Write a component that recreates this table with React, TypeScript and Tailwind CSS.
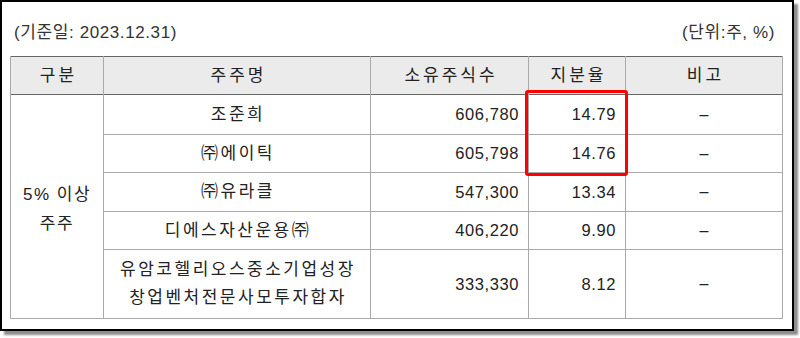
const rows = [
  { name: ["조준희"], shares: "606,780", ratio: "14.79", h: "h-[40px]" },
  { name: ["㈜에이틱"], shares: "605,798", ratio: "14.76", h: "h-[38px]" },
  { name: ["㈜유라클"], shares: "547,300", ratio: "13.34", h: "h-[39px]" },
  { name: ["디에스자산운용㈜"], shares: "406,220", ratio: "9.90", h: "h-[38px]" },
  {
    name: ["유암코헬리오스중소기업성장", "창업벤처전문사모투자합자"],
    shares: "333,330",
    ratio: "8.12",
    h: "h-[69px]",
  },
];

export default function App() {
  return (
    <div className="w-[800px] h-[338px] bg-white font-['Liberation_Sans','Noto_Sans_CJK_KR',sans-serif] text-[#222]">
      <div className="relative w-[794px] h-[331px] border-2 border-black bg-white shadow-[4px_4px_2px_rgba(0,0,0,0.45)]">
        <div className="flex justify-between pl-[12px] pr-[17px] pt-[20px] h-[54px] text-[17px] leading-[21px] tracking-[0.6px] text-[#333]">
          <span>(기준일: 2023.12.31)</span>
          <span>(단위:주, %)</span>
        </div>
        <div className="pl-[8px]">
          <table className="w-[772px] table-fixed border-collapse border border-[#666] text-[16px]">
            <colgroup>
              <col className="w-[93px]" />
              <col className="w-[267px]" />
              <col className="w-[158px]" />
              <col className="w-[97px]" />
              <col className="w-[157px]" />
            </colgroup>
            <thead>
              <tr className="h-[38px] bg-[#ebebeb] border-b border-[#666]">
                {["구분", "주주명", "소유주식수", "지분율", "비고"].map((t) => (
                  <th
                    key={t}
                    className="border-x border-[#aaa] font-normal text-center text-[17px] tracking-[3px] p-0 pl-[3px]"
                  >
                    {t}
                  </th>
                ))}
              </tr>
            </thead>
            <tbody>
              {rows.map((r, i) => (
                <tr key={r.shares} className={`${r.h} border-b border-[#aaa]`}>
                  {i === 0 && (
                    <td
                      rowSpan={5}
                      className="border-x border-[#aaa] text-center text-[17px] leading-[29px] tracking-[1.5px] p-0 pt-[4px]"
                    >
                      5% 이상
                      <br />
                      주주
                    </td>
                  )}
                  <td className="border-x border-[#aaa] text-center text-[17px] leading-[28px] tracking-[2.5px] p-0 pl-[2px]">
                    {r.name.map((n) => (
                      <div key={n}>{n}</div>
                    ))}
                  </td>
                  <td className="border-x border-[#aaa] text-right text-[16.5px] pr-[9px] tracking-[0.6px] p-0">
                    {r.shares}
                  </td>
                  <td className="border-x border-[#aaa] text-right text-[16.5px] pr-[9px] tracking-[0.6px] p-0">
                    {r.ratio}
                  </td>
                  <td className="border-x border-[#aaa] text-center p-0">–</td>
                </tr>
              ))}
            </tbody>
          </table>
        </div>
        <div className="absolute left-[523px] top-[88px] w-[103px] h-[86px] border-[3px] border-[#f00] rounded-[3px]" />
      </div>
    </div>
  );
}
